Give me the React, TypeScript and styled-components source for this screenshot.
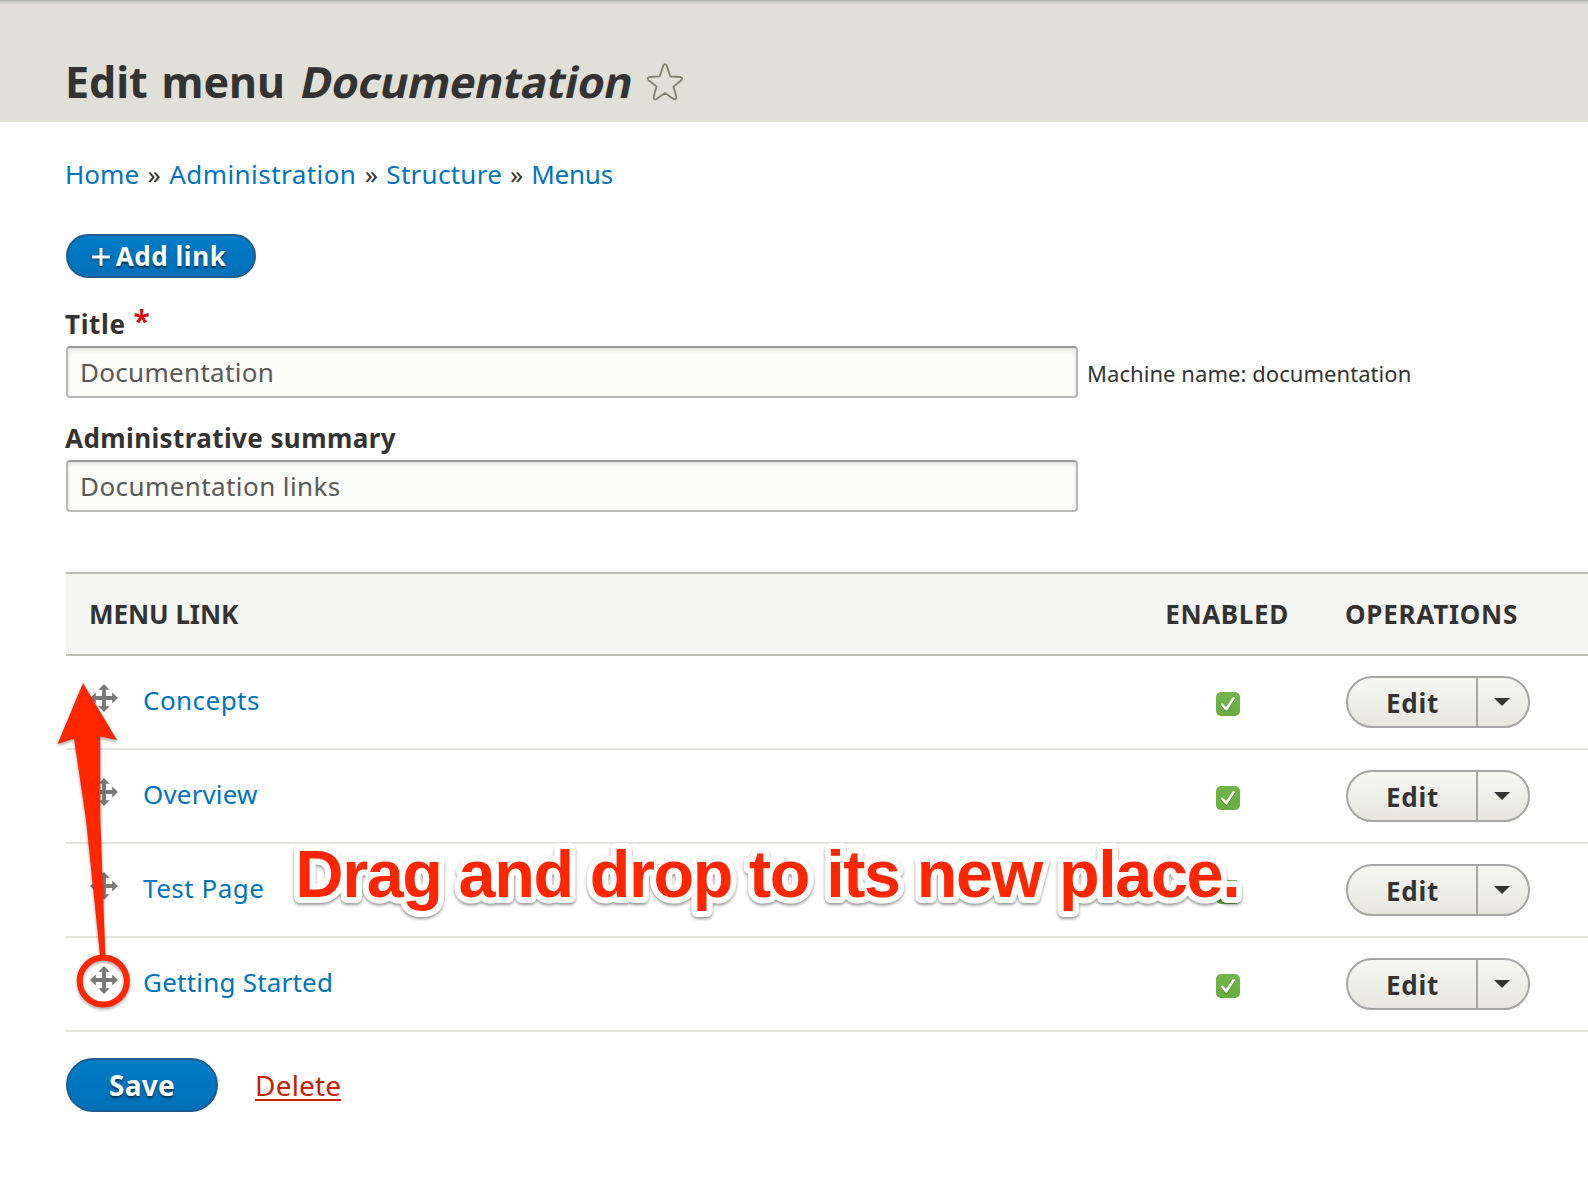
import React from "react";
import styled, { createGlobalStyle } from "styled-components";

const GlobalStyle = createGlobalStyle`
  * { box-sizing: border-box; }
  body {
    margin: 0;
    background: #fff;
    color: #333;
    font-family: "Noto Sans", "Open Sans", sans-serif;
    font-size: 26px;
    line-height: 36px;
    overflow: hidden;
  }
`;

const Page = styled.div`
  position: relative;
  width: 1588px;
  height: 1182px;
  overflow: hidden;
`;

const Track = styled.span<{ $track: number; $word?: number }>`
  letter-spacing: ${(p) => p.$track}px;
  word-spacing: ${(p) => p.$word ?? 0}px;
  white-space: nowrap;
`;

const Header = styled.header`
  height: 122px;
  padding: 52px 0 0 65px;
  background: linear-gradient(#a9aaa3 0, #cfd0c8 2px, #dbdcd3 4px, #e0e0d8 7px);
`;

const Heading = styled.h1`
  display: flex;
  margin: 0;
  font-size: 43px;
  line-height: 60px;
  font-weight: 700;
`;

const Slanted = styled.em`
  display: inline-block;
  margin-left: 13.5px;
  font-style: normal;
  letter-spacing: -0.25px;
  transform: skewX(-12deg);
  transform-origin: 0 47px;
`;

const StarIcon = styled.svg`
  width: 38px;
  height: 38px;
  margin: 11px 0 0 16px;
  fill: none;
  stroke: #817f6c;
  stroke-width: 1.8;
  stroke-linejoin: round;
`;

const Content = styled.main`
  padding: 32px 0 0 66px;
`;

const Breadcrumb = styled.nav`
  display: flex;
  margin-left: -1px;
  line-height: 40px;
`;

const Link = styled.a<{ $track: number }>`
  color: #0074bd;
  letter-spacing: ${(p) => p.$track}px;
  white-space: nowrap;
`;

const Separator = styled.span<{ $width: number }>`
  width: ${(p) => p.$width}px;
  text-align: center;
`;

const PrimaryButton = styled.button<{ $large?: boolean }>`
  display: flex;
  align-items: center;
  justify-content: center;
  gap: 6px;
  width: ${(p) => (p.$large ? 152 : 190)}px;
  height: ${(p) => (p.$large ? 54 : 44)}px;
  padding: ${(p) => (p.$large ? "0" : "0 4px 0 0")};
  border: 2px solid #1e5c90;
  border-radius: 27px;
  background: linear-gradient(#007bc6, #0071b8);
  color: #fff;
  font: 700 ${(p) => (p.$large ? 28 : 26)}px/36px "Noto Sans", sans-serif;
  text-shadow: 0 2px 2px rgba(0, 0, 0, 0.55);
`;

const PlusIcon = styled.svg`
  width: 18px;
  height: 20px;
  margin-top: 2px;
  overflow: visible;
  stroke: #fff;
  stroke-width: 3;
  filter: drop-shadow(0 1.5px 1px rgba(0, 0, 0, 0.5));
`;

const Form = styled.form`
  display: flex;
  flex-direction: column;
  align-items: flex-start;
  padding-top: 40px;
`;

const Field = styled.div<{ $top: number }>`
  margin-top: ${(p) => p.$top}px;
`;

const Label = styled.label`
  display: flex;
  height: 36px;
  margin: 0 0 4px -1px;
  font-weight: 700;
`;

const Required = styled.span`
  margin: -3px 0 0 8px;
  color: #e00000;
  font-size: 30px;
  font-weight: 600;
`;

const InputLine = styled.div`
  display: flex;
  align-items: center;
`;

const TextInput = styled.input<{ $track: number }>`
  width: 1012px;
  height: 52px;
  padding: 0 0 0 12px;
  border: 2px solid #b8b8b8;
  border-top-color: #999;
  border-radius: 4px;
  background: #fcfcfa;
  box-shadow: inset 0 2px 4px rgba(0, 0, 0, 0.12);
  color: #595959;
  font: 400 26px "Noto Sans", sans-serif;
  letter-spacing: ${(p) => p.$track}px;
  outline: 0;
`;

const MachineName = styled.span`
  margin: 2px 0 0 9px;
  font-size: 22px;
  letter-spacing: 0.06px;
`;

const Table = styled.section`
  width: 1522px;
  margin-top: 60px;
`;

const Row = styled.div`
  display: grid;
  grid-template-columns: 1076px 172px 1fr;
  align-items: center;
  height: 94px;
  border-bottom: 2px solid #e2e3df;
`;

const HeadRow = styled(Row)`
  height: 84px;
  border-top: 2px solid #bebfb9;
  border-bottom-color: #bebfb9;
  background: #f5f5f3;
  font-weight: 700;
`;

const NameCell = styled.div`
  display: flex;
  align-items: center;
  padding-left: 23px;
`;

const LinkCell = styled(NameCell)`
  gap: 25px;
  padding: 0 0 4px 24px;
`;

const MoveIcon = styled.svg`
  width: 28px;
  height: 28px;
  margin-top: -4px;
  fill: #787878;
`;

const EnabledCell = styled.div`
  display: flex;
  justify-content: center;
`;

const HeadEnabledCell = styled(EnabledCell)`
  padding-right: 2px;
`;

const OperationsCell = styled.div`
  padding-left: 32px;
`;

const HeadOperationsCell = styled(OperationsCell)`
  padding-left: 31px;
`;

const Checkbox = styled.span`
  display: flex;
  width: 24px;
  height: 24px;
  margin-top: 4px;
  border-radius: 5px;
  background: linear-gradient(#72b54a, #69ac40);
`;

const CheckIcon = styled.svg`
  width: 24px;
  height: 24px;
  fill: none;
  stroke: #fff;
  stroke-width: 2.5;
  stroke-linecap: round;
  stroke-linejoin: round;
  filter: drop-shadow(0 1px 0.5px rgba(0, 0, 0, 0.3));
`;

const DropButton = styled.div`
  display: flex;
  width: 184px;
  height: 52px;
  border: 2px solid #a6a6a6;
  border-radius: 26px;
  background: linear-gradient(#f6f6f3, #e7e7df);
`;

const EditAction = styled.div`
  display: flex;
  align-items: center;
  width: 130px;
  padding: 1px 0 0 38px;
  border-right: 2px solid #a6a6a6;
  font-weight: 700;
  text-shadow: 0 1px 1px #fff;
`;

const Toggle = styled.div`
  display: flex;
  flex: 1;
  align-items: center;
  justify-content: center;
`;

const Caret = styled.span`
  border: 8px solid transparent;
  border-top-color: #333;
  border-bottom: 0;
  margin-right: 2px;
`;

const Actions = styled.div`
  display: flex;
  align-items: center;
  gap: 37px;
  margin-top: 26px;
`;

const DeleteLink = styled.a`
  height: 31px;
  margin-top: 1px;
  border-bottom: 2px solid #c72100;
  color: #c72100;
  font-size: 28px;
  line-height: 31px;
  letter-spacing: 0.2px;
`;

const Callout = styled.svg`
  position: absolute;
  top: 670px;
  left: 40px;
  width: 110px;
  height: 350px;
  overflow: visible;
  filter: drop-shadow(0 2px 1.5px rgba(0, 0, 0, 0.35));
`;

const Instruction = styled.svg`
  position: absolute;
  top: 830px;
  left: 280px;
  width: 980px;
  height: 100px;
  overflow: visible;
  fill: #ff2600;
  stroke: #fff;
  stroke-width: 12px;
  stroke-linejoin: round;
  paint-order: stroke fill;
  font: 700 66.5px "Liberation Sans", Arial, sans-serif;
  letter-spacing: -1.38px;
  filter: drop-shadow(0 2px 1.5px rgba(0, 0, 0, 0.4));
`;

const Star = () => (
  <StarIcon viewBox="0 0 38 38">
    <path d="M17.3 2.6Q19 -.2 20.7 2.6L24.3 13.4L34.5 14Q37.6 15 35.4 17.2L27.4 23.6L30.3 33.6Q30.5 37.2 27.5 36L19 30L10.5 36Q7.5 37.2 7.7 33.6L10.6 23.6L2.6 17.2Q.4 15 3.5 14L13.7 13.4Z" />
  </StarIcon>
);

const Move = () => (
  <MoveIcon viewBox="0 0 28 28">
    <path d="M14 0l5.6 5.8h-3.7v6.3h6.3V8.4L28 14l-5.8 5.6v-3.7h-6.3v6.3h3.7L14 28l-5.6-5.8h3.7v-6.3H5.8v3.7L0 14l5.8-5.6v3.7h6.3V5.8H8.4z" />
  </MoveIcon>
);

const links = [
  { name: "Concepts", track: 0.46 },
  { name: "Overview", track: 0.15 },
  { name: "Test Page", track: 0.5 },
  { name: "Getting Started", track: 0.22 },
];

export default function App() {
  return (
    <Page>
      <GlobalStyle />
      <Header>
        <Heading>
          <Track $track={0} $word={2.5}>Edit menu</Track>
          <Slanted>Documentation</Slanted>
          <Star />
        </Heading>
      </Header>
      <Content>
        <Breadcrumb>
          <Link $track={0.06}>Home</Link>
          <Separator $width={30}>»</Separator>
          <Link $track={0.44}>Administration</Link>
          <Separator $width={30}>»</Separator>
          <Link $track={0.28}>Structure</Link>
          <Separator $width={29}>»</Separator>
          <Link $track={-0.2}>Menus</Link>
        </Breadcrumb>
        <Form>
          <PrimaryButton type="button">
            <PlusIcon viewBox="0 0 18 20">
              <path d="M0 10H18M9 1V19" />
            </PlusIcon>
            <Track $track={0.57}>Add link</Track>
          </PrimaryButton>
          <Field $top={28}>
            <Label>
              <Track $track={0.65}>Title</Track>
              <Required>*</Required>
            </Label>
            <InputLine>
              <TextInput defaultValue="Documentation" $track={0.3} />
              <MachineName>Machine name: documentation</MachineName>
            </InputLine>
          </Field>
          <Field $top={22}>
            <Label>
              <Track $track={0.4}>Administrative summary</Track>
            </Label>
            <InputLine>
              <TextInput defaultValue="Documentation links" $track={0.42} />
            </InputLine>
          </Field>
          <Table>
            <HeadRow>
              <NameCell>
                <Track $track={-0.05}>MENU LINK</Track>
              </NameCell>
              <HeadEnabledCell>
                <Track $track={0.65}>ENABLED</Track>
              </HeadEnabledCell>
              <HeadOperationsCell>
                <Track $track={0.74}>OPERATIONS</Track>
              </HeadOperationsCell>
            </HeadRow>
            {links.map((link) => (
              <Row key={link.name}>
                <LinkCell>
                  <Move />
                  <Link $track={link.track}>{link.name}</Link>
                </LinkCell>
                <EnabledCell>
                  <Checkbox>
                    <CheckIcon viewBox="0 0 24 24">
                      <path d="M6.3 12.8L10.3 17.3L17.6 6.3" />
                    </CheckIcon>
                  </Checkbox>
                </EnabledCell>
                <OperationsCell>
                  <DropButton>
                    <EditAction>
                      <Track $track={0.74}>Edit</Track>
                    </EditAction>
                    <Toggle>
                      <Caret />
                    </Toggle>
                  </DropButton>
                </OperationsCell>
              </Row>
            ))}
          </Table>
          <Actions>
            <PrimaryButton type="button" $large>
              <Track $track={0.25}>Save</Track>
            </PrimaryButton>
            <DeleteLink>Delete</DeleteLink>
          </Actions>
        </Form>
      </Content>
      <Callout viewBox="40 670 110 350">
        <path
          d="M83 683L117 740L100.2 736.5L100.4 820L105.5 960H100.5L86 820L74 738.5L57.5 744Z"
          fill="#ff2600"
        />
        <circle cx="103.3" cy="981" r="23.6" fill="none" stroke="#ff2600" strokeWidth="6" />
      </Callout>
      <Instruction viewBox="0 0 980 100">
        <text x="15.5" y="67">Drag and drop to its new place.</text>
      </Instruction>
    </Page>
  );
}
